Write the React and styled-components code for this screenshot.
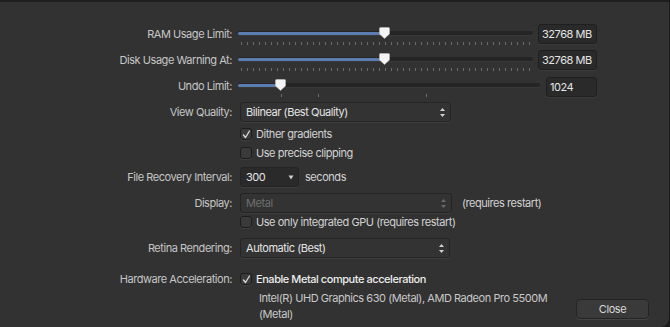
import React from "react";
import styled, { createGlobalStyle } from "styled-components";

const Global = createGlobalStyle`
  html, body { margin: 0; padding: 0; background: #1c1c1c; }
  body {
    font-family: Inter, "Noto Sans", "Liberation Sans", sans-serif;
    letter-spacing: -0.45px;
  }
  * { box-sizing: border-box; }
`;

const Window = styled.div`
  width: 670px;
  height: 327px;
  background: #323232;
  border-top: 2px solid #1e1e1e;
  border-right: 1px solid #1b1b1b;
  border-bottom-right-radius: 9px;
  padding-top: 22px;
  display: flex;
  flex-direction: column;
  overflow: hidden;
`;

const Row = styled.div`
  display: grid;
  grid-template-columns: 232px 1fr;
  column-gap: 6px;
  align-items: ${(p) => (p.$top ? "start" : "center")};
  height: ${(p) => p.$h}px;
  margin-top: ${(p) => p.$mt || 0}px;
  flex-shrink: 0;
`;

const Label = styled.div`
  text-align: right;
  font-size: 11px;
  line-height: ${(p) => (p.$lh ? p.$lh + "px" : "normal")};
  color: #c6c6c6;
  white-space: nowrap;
`;

const Controls = styled.div`
  display: flex;
  align-items: ${(p) => (p.$top ? "flex-start" : "center")};
  gap: ${(p) => p.$gap ?? 5}px;
  padding-left: ${(p) => p.$pl || 0}px;
  padding-right: ${(p) => p.$pr || 0}px;
  height: 100%;
`;

const SliderBox = styled.div`
  position: relative;
  width: ${(p) => p.$w}px;
  height: 26px;
  flex-shrink: 0;
`;

const Track = styled.div`
  position: relative;
  margin-top: 7px;
  height: 4px;
  border-radius: 2px;
  background: #252525;
  box-shadow: 0 1px 0 #383838;
`;

const Fill = styled.div`
  position: absolute;
  left: 0;
  top: 0.5px;
  height: 3px;
  border-radius: 2px;
  background: #5b7db0;
`;

const TickRow = styled.div`
  display: flex;
  justify-content: space-between;
  padding: 0 3px;
  margin-top: 7px;
  height: 3px;
`;

const Tick = styled.span`
  width: 1px;
  height: 3px;
  background: #6c6c6c;
`;

const FreeTick = styled.span`
  position: absolute;
  top: 18px;
  width: 1px;
  height: 3px;
  background: #6c6c6c;
`;

const Thumb = styled.svg`
  position: absolute;
  top: 3px;
  width: 11px;
  height: 12px;
`;

const ValueField = styled.div`
  width: ${(p) => p.$w}px;
  height: 20px;
  margin-top: ${(p) => p.$mt || 0}px;
  border: 1px solid #1f1f1f;
  border-radius: 3px;
  background: #2a2a2a;
  box-shadow: 0 1px 0 #3b3b3b;
  color: #e4e4e4;
  font-size: 11px;
  line-height: 18px;
  padding-left: 3px;
  flex-shrink: 0;
`;

const SelectBox = styled.div`
  width: ${(p) => p.$w}px;
  height: 20px;
  margin-left: 2px;
  border: 1px solid #242424;
  border-radius: 3px;
  background: #333333;
  box-shadow: 0 1px 0 #3d3d3d;
  display: flex;
  align-items: center;
  justify-content: space-between;
  padding: 0 4px 0 5px;
  color: ${(p) => (p.$disabled ? "#6e6e6e" : "#e4e4e4")};
  font-size: 11px;
  flex-shrink: 0;
`;

const ComboBox = styled(SelectBox)`
  background: #2a2a2a;
  padding: 0 4px 0 5px;
`;

const Text = styled.span`
  font-size: 11px;
  color: ${(p) => p.$color || "#d2d2d2"};
  font-weight: ${(p) => p.$weight || 400};
  white-space: nowrap;
`;

const CheckWrap = styled.div`
  display: flex;
  align-items: center;
  gap: 4px;
  margin-left: 2px;
`;

const Box = styled.div`
  width: 12px;
  height: 12px;
  border-radius: 3px;
  border: 1px solid #1c1c1c;
  background: #3a3a3a;
  box-shadow: 0 1px 0 #404040;
  display: flex;
  align-items: center;
  justify-content: center;
`;

const InfoText = styled.div`
  font-size: 11px;
  line-height: 16px;
  color: #c8c8c8;
  width: 292px;
  padding-left: 21px;
  box-sizing: content-box;
`;

const CloseButton = styled.button`
  margin-left: auto;
  margin-top: 9px;
  width: 73px;
  height: 20px;
  border: 1px solid #242424;
  border-radius: 4px;
  background: #3a3a3a;
  box-shadow: 0 1px 0 #444;
  color: #d8d8d8;
  font-family: inherit;
  letter-spacing: inherit;
  font-size: 11px;
  padding: 0;
`;

function Slider({ w, pct, ticks, freeTicks }) {
  const x = (w * pct) / 100;
  return (
    <SliderBox $w={w}>
      <Track>
        <Fill style={{ width: x }} />
      </Track>
      {ticks ? (
        <TickRow>
          {Array.from({ length: ticks }).map((_, i) => (
            <Tick key={i} />
          ))}
        </TickRow>
      ) : null}
      {freeTicks
        ? freeTicks.map((t) => <FreeTick key={t} style={{ left: t }} />)
        : null}
      <Thumb viewBox="0 0 11 12" style={{ left: x - 5.5 }}>
        <path
          d="M1.5 0.5 H9.5 A1 1 0 0 1 10.5 1.5 V7 L5.5 11.5 L0.5 7 V1.5 A1 1 0 0 1 1.5 0.5 Z"
          fill="#f4f4f4"
          stroke="#bdbdbd"
          strokeWidth="0.6"
        />
      </Thumb>
    </SliderBox>
  );
}

function UpDown({ color = "#d0d0d0" }) {
  return (
    <svg width="7" height="11" viewBox="0 0 7 11">
      <path d="M3.5 1 L6 4 H1 Z" fill={color} />
      <path d="M3.5 10 L6 7 H1 Z" fill={color} />
    </svg>
  );
}

function Check({ checked }) {
  return (
    <Box>
      {checked ? (
        <svg width="9" height="9" viewBox="0 0 9 9">
          <path
            d="M1.5 5 L3.5 7.5 L7.5 1"
            fill="none"
            stroke="#d4d4d4"
            strokeWidth="1.4"
            strokeLinecap="round"
            strokeLinejoin="round"
          />
        </svg>
      ) : null}
    </Box>
  );
}

function CheckItem({ checked, children, bright }) {
  return (
    <CheckWrap>
      <Check checked={checked} />
      <Text $color={bright ? "#ececec" : "#d2d2d2"} $weight={bright ? 500 : 400}>
        {children}
      </Text>
    </CheckWrap>
  );
}

export default function App() {
  return (
    <>
      <Global />
      <Window>
        <Row $h={26} $top>
          <Label $lh={20}>RAM Usage Limit:</Label>
          <Controls $top>
            <Slider w={295} pct={49.8} ticks={49} />
            <ValueField $w={59}>32768 MB</ValueField>
          </Controls>
        </Row>
        <Row $h={26} $top>
          <Label $lh={20}>Disk Usage Warning At:</Label>
          <Controls $top>
            <Slider w={295} pct={49.8} ticks={49} />
            <ValueField $w={59}>32768 MB</ValueField>
          </Controls>
        </Row>
        <Row $h={26} $top>
          <Label $lh={20}>Undo Limit:</Label>
          <Controls $top $gap={6}>
            <Slider w={302} pct={14.2} freeTicks={[43, 80, 188]} />
            <ValueField $w={51} $mt={1}>1024</ValueField>
          </Controls>
        </Row>
        <Row $h={20}>
          <Label>View Quality:</Label>
          <Controls>
            <SelectBox $w={211}>
              <span>Bilinear (Best Quality)</span>
              <UpDown />
            </SelectBox>
          </Controls>
        </Row>
        <Row $h={18} $mt={3}>
          <span />
          <CheckItem checked>Dither gradients</CheckItem>
        </Row>
        <Row $h={18} $mt={1}>
          <span />
          <CheckItem>Use precise clipping</CheckItem>
        </Row>
        <Row $h={20} $mt={5}>
          <Label>File Recovery Interval:</Label>
          <Controls $gap={6}>
            <ComboBox $w={59}>
              <span>300</span>
              <svg width="6" height="5" viewBox="0 0 6 5">
                <path d="M0.5 0.5 H5.5 L3 4.5 Z" fill="#cfcfcf" />
              </svg>
            </ComboBox>
            <Text>seconds</Text>
          </Controls>
        </Row>
        <Row $h={20} $mt={6}>
          <Label>Display:</Label>
          <Controls $gap={10}>
            <SelectBox $w={212} $disabled>
              <span>Metal</span>
              <UpDown color="#6a6a6a" />
            </SelectBox>
            <Text>(requires restart)</Text>
          </Controls>
        </Row>
        <Row $h={18}>
          <span />
          <CheckItem>Use only integrated GPU (requires restart)</CheckItem>
        </Row>
        <Row $h={20} $mt={7}>
          <Label>Retina Rendering:</Label>
          <Controls>
            <SelectBox $w={210}>
              <span>Automatic (Best)</span>
              <UpDown />
            </SelectBox>
          </Controls>
        </Row>
        <Row $h={18} $mt={12}>
          <Label>Hardware Acceleration:</Label>
          <CheckItem checked bright>
            Enable Metal compute acceleration
          </CheckItem>
        </Row>
        <Row $h={34} $mt={2} $top>
          <span />
          <Controls $top $pr={20}>
            <InfoText>
              Intel(R) UHD Graphics 630 (Metal), AMD Radeon Pro 5500M (Metal)
            </InfoText>
            <CloseButton>Close</CloseButton>
          </Controls>
        </Row>
      </Window>
    </>
  );
}
